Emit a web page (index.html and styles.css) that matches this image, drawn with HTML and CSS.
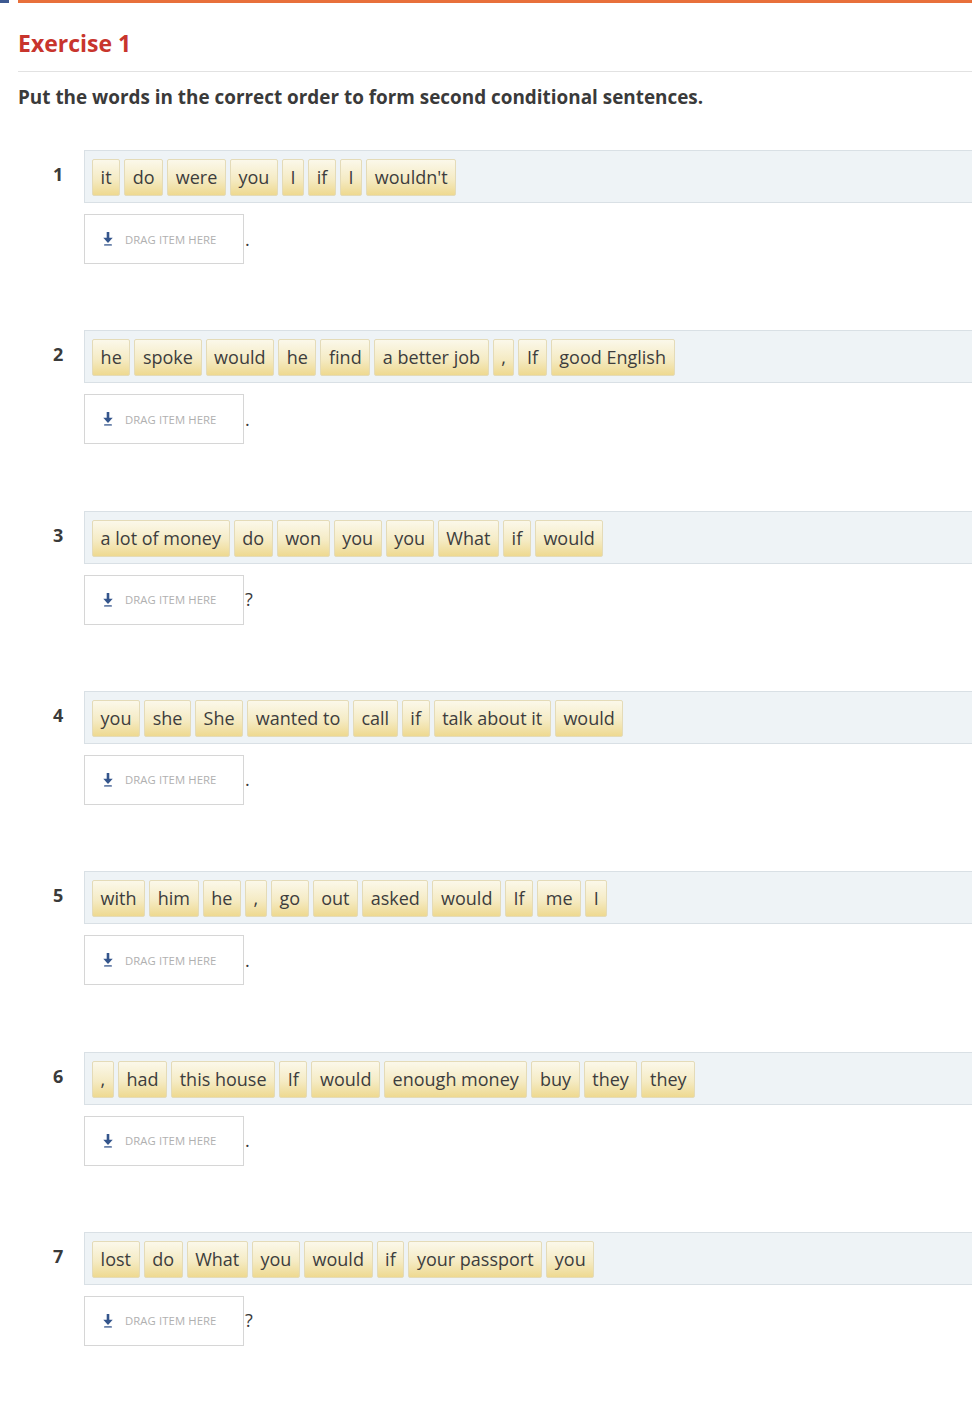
FILE: index.html
```html
<!DOCTYPE html>
<html lang="en">
<head>
<meta charset="utf-8">
<title>Exercise 1</title>
<link rel="stylesheet" href="styles.css">
</head>
<body>
<div class="topbar"><span class="topbar-blue"></span><span class="topbar-orange"></span></div>
<main class="content">
  <h1 class="title">Exercise 1</h1>
  <p class="instruction">Put the words in the correct order to form second conditional sentences.</p>

  <section class="item">
    <div class="num">1</div>
    <div class="body">
      <div class="tray">
        <span class="tile">it</span><span class="tile">do</span><span class="tile">were</span><span class="tile">you</span><span class="tile">I</span><span class="tile">if</span><span class="tile">I</span><span class="tile">wouldn't</span>
      </div>
      <div class="answer">
        <div class="drop"><svg class="drop-icon" viewBox="0 0 10 14" width="10" height="14"><rect x="3.7" y="0" width="2.6" height="6.5" fill="#34558c"/><path d="M0.3 5.8 L9.7 5.8 L5 11 Z" fill="#34558c"/><rect x="1" y="12" width="8" height="1.8" rx="0.9" fill="#6a82aa"/></svg><span class="drop-text">DRAG ITEM HERE</span></div>
        <span class="punct">.</span>
      </div>
    </div>
  </section>

  <section class="item">
    <div class="num">2</div>
    <div class="body">
      <div class="tray">
        <span class="tile">he</span><span class="tile">spoke</span><span class="tile">would</span><span class="tile">he</span><span class="tile">find</span><span class="tile">a better job</span><span class="tile">,</span><span class="tile">If</span><span class="tile">good English</span>
      </div>
      <div class="answer">
        <div class="drop"><svg class="drop-icon" viewBox="0 0 10 14" width="10" height="14"><rect x="3.7" y="0" width="2.6" height="6.5" fill="#34558c"/><path d="M0.3 5.8 L9.7 5.8 L5 11 Z" fill="#34558c"/><rect x="1" y="12" width="8" height="1.8" rx="0.9" fill="#6a82aa"/></svg><span class="drop-text">DRAG ITEM HERE</span></div>
        <span class="punct">.</span>
      </div>
    </div>
  </section>

  <section class="item">
    <div class="num">3</div>
    <div class="body">
      <div class="tray">
        <span class="tile">a lot of money</span><span class="tile">do</span><span class="tile">won</span><span class="tile">you</span><span class="tile">you</span><span class="tile">What</span><span class="tile">if</span><span class="tile">would</span>
      </div>
      <div class="answer">
        <div class="drop"><svg class="drop-icon" viewBox="0 0 10 14" width="10" height="14"><rect x="3.7" y="0" width="2.6" height="6.5" fill="#34558c"/><path d="M0.3 5.8 L9.7 5.8 L5 11 Z" fill="#34558c"/><rect x="1" y="12" width="8" height="1.8" rx="0.9" fill="#6a82aa"/></svg><span class="drop-text">DRAG ITEM HERE</span></div>
        <span class="punct">?</span>
      </div>
    </div>
  </section>

  <section class="item">
    <div class="num">4</div>
    <div class="body">
      <div class="tray">
        <span class="tile">you</span><span class="tile">she</span><span class="tile">She</span><span class="tile">wanted to</span><span class="tile">call</span><span class="tile">if</span><span class="tile">talk about it</span><span class="tile">would</span>
      </div>
      <div class="answer">
        <div class="drop"><svg class="drop-icon" viewBox="0 0 10 14" width="10" height="14"><rect x="3.7" y="0" width="2.6" height="6.5" fill="#34558c"/><path d="M0.3 5.8 L9.7 5.8 L5 11 Z" fill="#34558c"/><rect x="1" y="12" width="8" height="1.8" rx="0.9" fill="#6a82aa"/></svg><span class="drop-text">DRAG ITEM HERE</span></div>
        <span class="punct">.</span>
      </div>
    </div>
  </section>

  <section class="item">
    <div class="num">5</div>
    <div class="body">
      <div class="tray">
        <span class="tile">with</span><span class="tile">him</span><span class="tile">he</span><span class="tile">,</span><span class="tile">go</span><span class="tile">out</span><span class="tile">asked</span><span class="tile">would</span><span class="tile">If</span><span class="tile">me</span><span class="tile">I</span>
      </div>
      <div class="answer">
        <div class="drop"><svg class="drop-icon" viewBox="0 0 10 14" width="10" height="14"><rect x="3.7" y="0" width="2.6" height="6.5" fill="#34558c"/><path d="M0.3 5.8 L9.7 5.8 L5 11 Z" fill="#34558c"/><rect x="1" y="12" width="8" height="1.8" rx="0.9" fill="#6a82aa"/></svg><span class="drop-text">DRAG ITEM HERE</span></div>
        <span class="punct">.</span>
      </div>
    </div>
  </section>

  <section class="item">
    <div class="num">6</div>
    <div class="body">
      <div class="tray">
        <span class="tile">,</span><span class="tile">had</span><span class="tile">this house</span><span class="tile">If</span><span class="tile">would</span><span class="tile">enough money</span><span class="tile">buy</span><span class="tile">they</span><span class="tile">they</span>
      </div>
      <div class="answer">
        <div class="drop"><svg class="drop-icon" viewBox="0 0 10 14" width="10" height="14"><rect x="3.7" y="0" width="2.6" height="6.5" fill="#34558c"/><path d="M0.3 5.8 L9.7 5.8 L5 11 Z" fill="#34558c"/><rect x="1" y="12" width="8" height="1.8" rx="0.9" fill="#6a82aa"/></svg><span class="drop-text">DRAG ITEM HERE</span></div>
        <span class="punct">.</span>
      </div>
    </div>
  </section>

  <section class="item">
    <div class="num">7</div>
    <div class="body">
      <div class="tray">
        <span class="tile">lost</span><span class="tile">do</span><span class="tile">What</span><span class="tile">you</span><span class="tile">would</span><span class="tile">if</span><span class="tile">your passport</span><span class="tile">you</span>
      </div>
      <div class="answer">
        <div class="drop"><svg class="drop-icon" viewBox="0 0 10 14" width="10" height="14"><rect x="3.7" y="0" width="2.6" height="6.5" fill="#34558c"/><path d="M0.3 5.8 L9.7 5.8 L5 11 Z" fill="#34558c"/><rect x="1" y="12" width="8" height="1.8" rx="0.9" fill="#6a82aa"/></svg><span class="drop-text">DRAG ITEM HERE</span></div>
        <span class="punct">?</span>
      </div>
    </div>
  </section>
</main>
</body>
</html>
```

FILE: styles.css
```css
html, body {
  margin: 0;
  padding: 0;
  background: #ffffff;
}

body {
  font-family: "Open Sans", "Noto Sans", "DejaVu Sans", sans-serif;
  color: #333333;
  overflow-x: hidden;
}

.topbar {
  display: flex;
  height: 3px;
  gap: 9px;
}

.topbar-blue {
  width: 9px;
  background: #3e5a91;
}

.topbar-orange {
  flex: 1;
  background: #e8703b;
}

.content {
  padding-left: 18px;
}

.title {
  margin: 25px 0 0 0;
  font-size: 23px;
  line-height: 30px;
  font-weight: 700;
  color: #c8352d;
  padding-bottom: 13px;
  border-bottom: 1px solid #e2e2e2;
}

.instruction {
  margin: 13px 0 41px 0;
  font-size: 18.9px;
  line-height: 24px;
  font-weight: 700;
  color: #3a3a3a;
}

.item {
  display: flex;
  margin-bottom: 66.33px;
}

.num {
  width: 31px;
  padding-left: 35px;
  padding-top: 12px;
  font-size: 18px;
  line-height: 24px;
  font-weight: 700;
  color: #3a3a3a;
}

.body {
  flex: 1;
}

.tray {
  display: flex;
  flex-wrap: wrap;
  gap: 4px;
  background: #eef3f6;
  border: 1px solid #d9e0e5;
  border-right: none;
  padding: 8px 7px 6px 7px;
}

.tile {
  display: inline-block;
  height: 35px;
  line-height: 35px;
  padding: 0 7.6px;
  font-size: 18px;
  color: #3d3d3d;
  background: linear-gradient(to bottom, #fbf8ea 0%, #f5ebc4 55%, #eed990 100%);
  border: 1px solid #e4dbb8;
  border-radius: 2px;
  white-space: nowrap;
}

.answer {
  display: flex;
  align-items: center;
  margin-top: 11px;
}

.drop {
  box-sizing: border-box;
  width: 160px;
  height: 50px;
  border: 1px solid #d6d6d6;
  background: #ffffff;
  display: flex;
  align-items: center;
  padding-left: 18px;
  gap: 12px;
}

.drop-icon {
  display: block;
}

.drop-text {
  font-size: 11.3px;
  color: #b0b0b0;
  letter-spacing: 0.1px;
}

.punct {
  font-size: 18px;
  color: #3a3a3a;
  padding-left: 1px;
  padding-bottom: 1px;
}
```
